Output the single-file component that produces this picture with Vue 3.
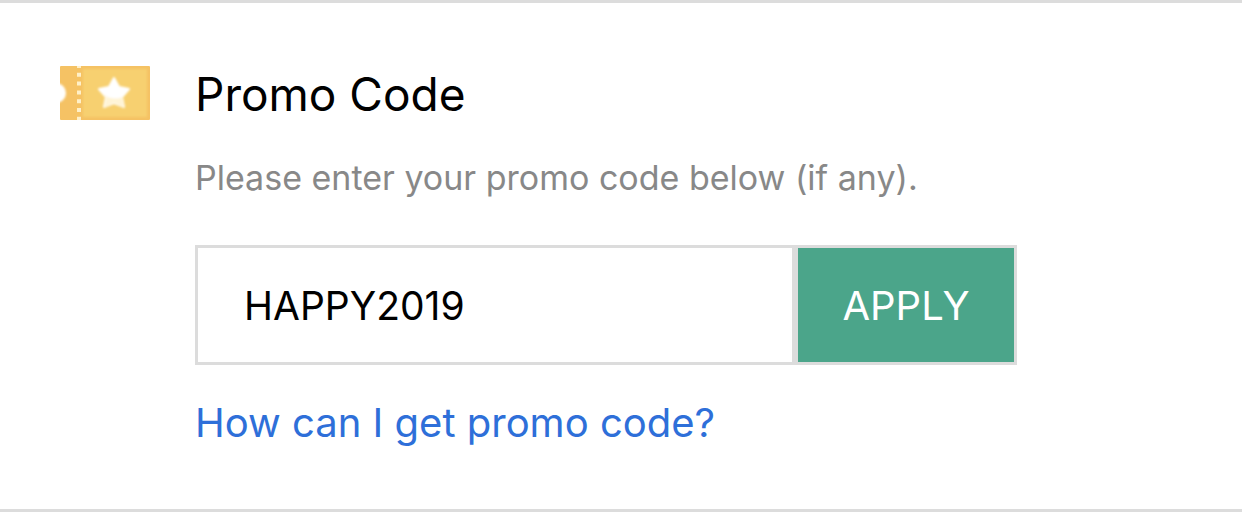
<template>
  <section class="promo">
    <svg class="promo-icon" viewBox="0 0 90 54" aria-hidden="true">
      <defs>
        <filter id="soften" x="-20%" y="-20%" width="140%" height="140%">
          <feGaussianBlur stdDeviation="0.8" />
        </filter>
      </defs>
      <rect width="90" height="54" rx="1" fill="#f5c264" />
      <g filter="url(#soften)">
        <rect x="23" y="3" width="64" height="48" rx="1" fill="#f7d070" />
        <circle cx="-4" cy="27" r="10" fill="#fff" />
      </g>
      <line class="perforation" x1="19" y1="-2" x2="19" y2="56" />
      <g filter="url(#soften)">
        <path class="star" d="M54 12 L59 21 L69 23 L62 31 L64 41 L54 37 L44 41 L46 31 L39 23 L49 21 Z" />
        <path d="M44 42 L46 31 L41 25 Q49 36 63 31 L64 42 L54 37 Z" fill="#fff4d6" />
      </g>
    </svg>

    <div class="promo-body">
      <h2 class="title">Promo Code</h2>
      <label class="hint" for="promo-code">Please enter your promo code below (if any).</label>

      <form class="promo-form" @submit.prevent>
        <input id="promo-code" v-model="code" class="code-input" type="text" autocomplete="off" spellcheck="false" />
        <button class="apply-btn" type="submit">APPLY</button>
      </form>

      <a class="help-link" href="#">How can I get promo code?</a>
    </div>
  </section>
</template>

<script setup>
import { ref } from 'vue'
const code = ref('HAPPY2019')
</script>

<style>
body {
  margin: 0;
  background: #fff;
}
</style>

<style scoped>
.promo {
  display: flex;
  align-items: flex-start;
  gap: 45px;
  padding: 63px 60px 58px;
  border-top: 3px solid #dcdcdc;
  border-bottom: 3px solid #dcdcdc;
  font-family: Inter, "Liberation Sans", sans-serif;
  color: #000;
}

.promo-icon {
  flex: none;
  width: 90px;
  height: 54px;
}

.perforation {
  stroke: #fff0c8;
  stroke-width: 4px;
  stroke-dasharray: 4 4.8;
}

.star {
  fill: #fff;
  stroke: #fff;
  stroke-width: 2px;
  stroke-linejoin: round;
}

.promo-body {
  flex: 1;
  min-width: 0;
  max-width: 822px;
}

.title {
  margin: 0 0 31px;
  font-size: 46px;
  font-weight: 400;
  line-height: 56px;
}

.hint {
  display: block;
  margin-bottom: 42px;
  font-size: 34px;
  line-height: 50px;
  color: #888;
}

.promo-form {
  display: flex;
  height: 120px;
  margin-bottom: 30px;
}

.code-input {
  flex: 1;
  min-width: 0;
  box-sizing: border-box;
  padding: 0 46px;
  border: 3px solid #dcdcdc;
  border-radius: 0;
  outline: none;
  background: #fff;
  font-family: inherit;
  font-size: 39px;
  color: #000;
}

.apply-btn {
  flex: none;
  box-sizing: border-box;
  width: 222px;
  padding: 0;
  border: 3px solid #dcdcdc;
  background: #4ba58a;
  font-family: inherit;
  font-size: 40px;
  color: #fff;
  cursor: pointer;
}

.help-link {
  display: block;
  font-size: 40px;
  line-height: 56px;
  color: #2e6fd9;
  text-decoration: none;
}
</style>
